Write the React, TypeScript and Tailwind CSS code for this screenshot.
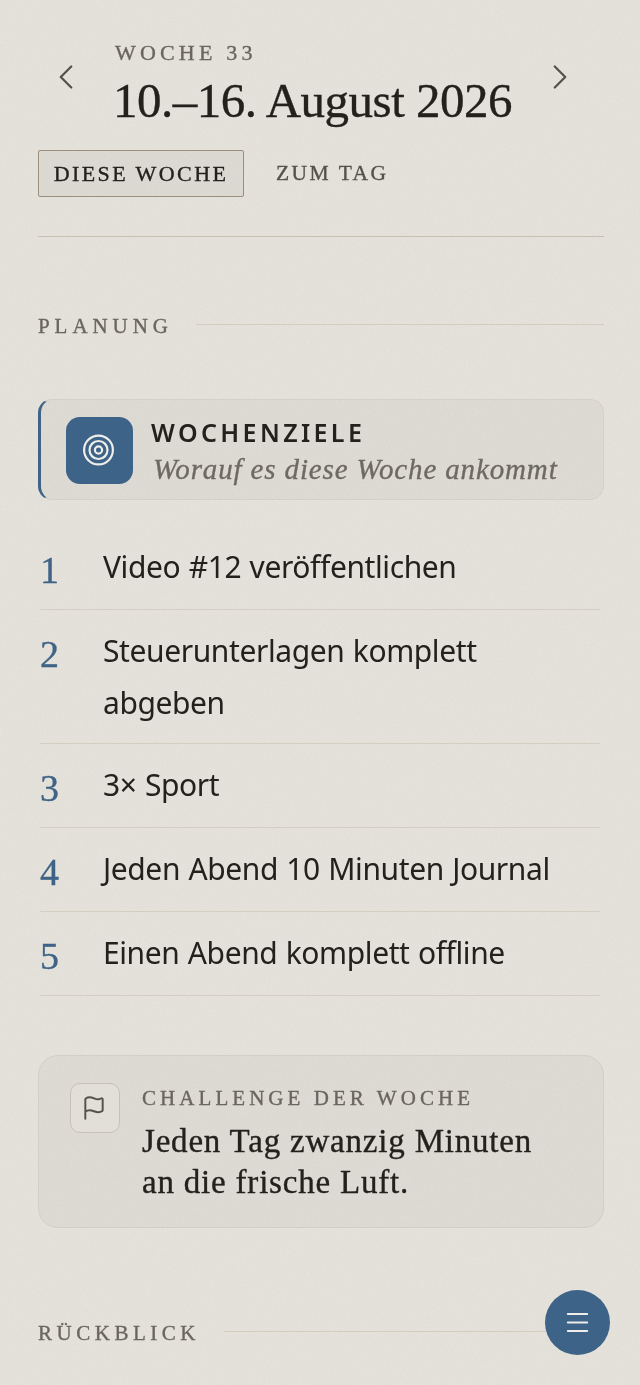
import { ChevronLeft, ChevronRight, Flag, Menu } from "lucide-react";

const GOALS = [
  { n: "1", text: "Video #12 veröffentlichen" },
  { n: "2", text: "Steuerunterlagen komplett abgeben" },
  { n: "3", text: "3× Sport" },
  { n: "4", text: "Jeden Abend 10 Minuten Journal" },
  { n: "5", text: "Einen Abend komplett offline" },
];

const SERIF = "font-['Liberation_Serif',serif] [-webkit-text-stroke:0.35px_currentColor]";

function SectionLabel({ label, className }: { label: string; className: string }) {
  return (
    <div className="flex items-center gap-6">
      <span className={`${SERIF} ${className} whitespace-nowrap text-[21px] leading-6 text-[#6b675f]`}>{label}</span>
      <div className="h-px flex-1 -translate-y-[2px] bg-[#d6cfbf]" />
    </div>
  );
}

export default function App() {
  return (
    <div className="relative h-[1385px] w-[640px] overflow-hidden bg-[#e6e3dd] text-[#24211d]">
      <div className="pl-[38px] pr-[36px] pt-[41px]">
        <div className="flex items-start justify-between pl-[7px] pr-[23px]">
          <ChevronLeft className="mt-[15px] size-[42px] text-[#55524b]" strokeWidth={1.3} />
          <div className="mr-auto ml-[26px]">
            <div className={`${SERIF} ml-[2px] text-[22px] leading-6 tracking-[0.19em] text-[#6b675f]`}>WOCHE 33</div>
            <h1 className={`${SERIF} mt-[11px] text-[49px] leading-[50px] tracking-[-0.01em]`}>10.–16. August 2026</h1>
          </div>
          <ChevronRight className="mt-[15px] size-[42px] text-[#55524b]" strokeWidth={1.3} />
        </div>

        <div className="mt-[24px] flex items-center gap-[32px]">
          <div className={`${SERIF} flex h-[47px] w-[206px] items-center justify-center rounded-[2px] border border-[#a08f7c] bg-[#dedbd5] text-[22px] tracking-[0.11em]`}>
            DIESE WOCHE
          </div>
          <div className={`${SERIF} text-[21.5px] tracking-[0.115em] text-[#55524b]`}>ZUM TAG</div>
        </div>

        <div className="mt-[39px] h-px bg-[#c9c2b2]" />

        <div className="mt-[77px]">
          <SectionLabel label="PLANUNG" className="w-[134px] tracking-[0.235em]" />
        </div>

        <div className="mt-[61px] flex h-[101px] items-center gap-[18px] rounded-[14px] border border-[#d8d3c8] border-l-[3px] border-l-[#3f6488] bg-[#dfdcd6] pl-[25px]">
          <div className="mt-[1px] flex size-[67px] items-center justify-center rounded-[14px] bg-[#3d6489]">
            <svg viewBox="0 0 32 32" className="size-[32px] -translate-x-[1.5px]" fill="none" stroke="#f1f0ec" strokeWidth="2.2">
              <circle cx="16" cy="16" r="14.4" />
              <circle cx="16" cy="16" r="9" />
              <circle cx="16" cy="16" r="3.6" />
            </svg>
          </div>
          <div className="pt-[1px]">
            <div className="font-['Noto_Sans',sans-serif] text-[25px] font-semibold leading-[32px] tracking-[0.135em] text-[#24211d]">WOCHENZIELE</div>
            <div className={`${SERIF} ml-[2px] mt-[5px] whitespace-nowrap text-[29px] italic leading-[32px] tracking-[0.86px] text-[#6f6b64]`}>Worauf es diese Woche ankommt</div>
          </div>
        </div>

        <ul className="mt-[26px] pl-[2px] pr-[4px]">
          {GOALS.map((g) => (
            <li key={g.n} className="flex min-h-[84px] border-b border-[#d6d0c4] pt-[15px] pb-[14px]">
              <span className={`${SERIF} w-[63px] shrink-0 pt-[9px] text-[38px] leading-[40px] text-[#3f6488]`}>{g.n}</span>
              <span className="font-['Noto_Sans',sans-serif] text-[30px] leading-[52px] tracking-[-0.4px] [word-spacing:1px] text-[#24211d]">{g.text}</span>
            </li>
          ))}
        </ul>

        <div className="mt-[59px] flex h-[173px] items-start gap-[22px] rounded-[20px] border border-[#d6d1c6] bg-[#dfdcd6] pl-[31px] pt-[27px]">
          <div className="flex size-[50px] shrink-0 items-center justify-center rounded-[10px] border border-[#cbc4b6] bg-[#e4e1db]">
            <Flag className="size-[26px] -translate-x-[1px] text-[#55524b]" strokeWidth={1.8} />
          </div>
          <div className="mt-[3px]">
            <div className={`${SERIF} text-[21px] leading-6 tracking-[0.193em] text-[#6b675f]`}>CHALLENGE DER WOCHE</div>
            <div className={`${SERIF} mt-[11px] text-[33px] leading-[41px] tracking-[0.8px]`}>
              Jeden Tag zwanzig Minuten
              <br />
              an die frische Luft.
            </div>
          </div>
        </div>

        <div className="mt-[93px]">
          <SectionLabel label="RÜCKBLICK" className="w-[162px] tracking-[0.215em]" />
        </div>
      </div>

      <div className="absolute left-[545px] top-[1290px] flex size-[65px] items-center justify-center rounded-full bg-[#3d6489]">
        <Menu className="size-[29px] text-[#f1f0ec]" strokeWidth={1.7} />
      </div>

      {/* paper grain over the whole page */}
      <svg className="pointer-events-none absolute inset-0 size-full opacity-[0.07] mix-blend-multiply">
        <filter id="grain">
          <feTurbulence type="fractalNoise" baseFrequency="0.55" numOctaves="3" stitchTiles="stitch" />
          <feColorMatrix type="saturate" values="0" />
        </filter>
        <rect width="100%" height="100%" filter="url(#grain)" />
      </svg>
    </div>
  );
}
